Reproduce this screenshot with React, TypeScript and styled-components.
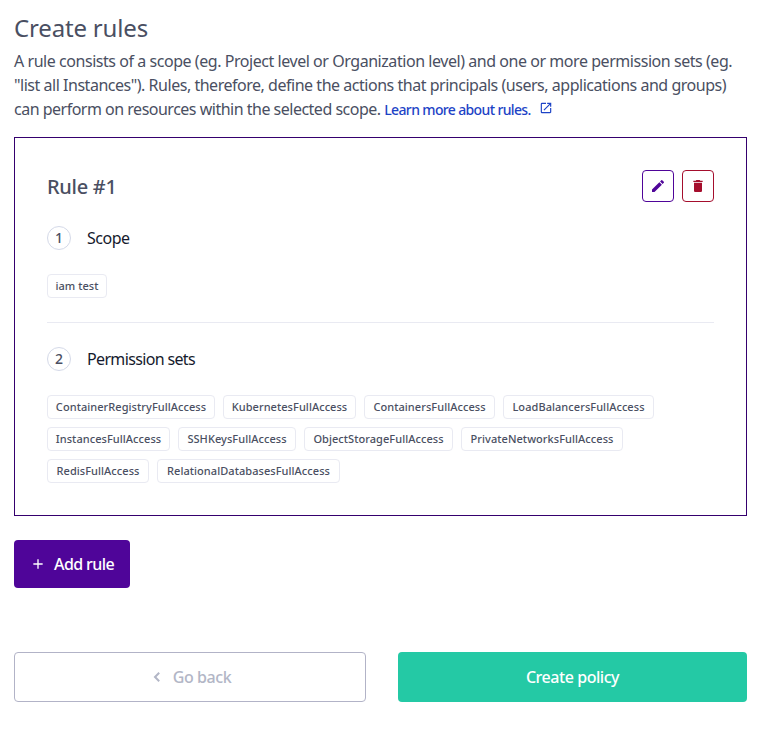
import React from "react";
import styled, { createGlobalStyle } from "styled-components";
import { MdAdd, MdDelete, MdEdit, MdOpenInNew } from "react-icons/md";

const GlobalStyle = createGlobalStyle`
  *, *::before, *::after { box-sizing: border-box; }
  body {
    margin: 0;
    background: #fff;
    color: #4a4f62;
    font-family: "Noto Sans", "Open Sans", sans-serif;
  }
  h1, h2, h3, p, ul, ol { margin: 0; padding: 0; font-weight: 400; }
  button { font-family: inherit; cursor: pointer; padding: 0; }
`;

const Page = styled.main`
  width: 733px;
  margin-left: 14px;
  padding-top: 12px;
`;

const Title = styled.h1`
  font-size: 24px;
  line-height: 32px;
  letter-spacing: -0.17px;
`;

const Intro = styled.p`
  margin-top: 5px;
  font-size: 16px;
  line-height: 24px;
`;

const Line = styled.span<{ $tracking?: number }>`
  display: block;
  height: 24px;
  white-space: nowrap;
  letter-spacing: ${({ $tracking = 0 }) => $tracking}px;
`;

const LearnMore = styled.a`
  color: #1d43c6;
  font-size: 14px;
  font-weight: 500;
  letter-spacing: -0.64px;
  text-decoration: none;

  svg {
    margin-left: 8px;
    width: 14px;
    height: 14px;
    vertical-align: 0;
  }
`;

const RuleCard = styled.section`
  margin-top: 16px;
  padding: 32px;
  height: 379px;
  border: 1px solid #35006e;
`;

const RuleHeader = styled.header`
  display: flex;
  align-items: center;
  justify-content: space-between;
  height: 32px;
`;

const RuleTitle = styled.h2`
  padding-top: 1px;
  font-size: 20px;
  font-weight: 500;
  line-height: 32px;
  letter-spacing: -0.3px;
`;

const Actions = styled.div`
  display: flex;
  gap: 8px;
`;

const IconButton = styled.button<{ $color: string }>`
  display: flex;
  align-items: center;
  justify-content: center;
  width: 32px;
  height: 32px;
  border: 1px solid ${({ $color }) => $color};
  border-radius: 4px;
  background: #fff;
  color: ${({ $color }) => $color};

  svg { width: 16px; height: 16px; }
`;

const Step = styled.div`
  display: flex;
  align-items: center;
  gap: 16px;
  margin-top: 24px;
`;

const StepNumber = styled.span`
  display: flex;
  align-items: center;
  justify-content: center;
  width: 24px;
  height: 24px;
  border: 1px solid #d4d9e8;
  border-radius: 50%;
  font-size: 14px;
  font-weight: 500;
  line-height: 22px;
`;

const StepLabel = styled.h3<{ $tracking: number }>`
  color: #151a2d;
  font-size: 16px;
  line-height: 24px;
  letter-spacing: ${({ $tracking }) => $tracking}px;
`;

const Chips = styled.ul`
  display: flex;
  flex-wrap: wrap;
  gap: 8px;
  margin-top: 24px;
  list-style: none;
`;

const Chip = styled.li<{ $width: number }>`
  display: flex;
  align-items: center;
  justify-content: center;
  width: ${({ $width }) => $width}px;
  height: 24px;
  border: 1px solid #e9eaf2;
  border-radius: 4px;
  font-size: 11px;
  font-weight: 500;
  line-height: 22px;
  letter-spacing: 0.06px;
  white-space: nowrap;
`;

const Divider = styled.hr`
  height: 1px;
  margin: 24px 0 0;
  border: 0;
  background: #e9eaf2;
`;

const Button = styled.button`
  display: flex;
  align-items: center;
  justify-content: center;
  border: 0;
  border-radius: 4px;
  color: #fff;
  font-size: 16px;
  font-weight: 500;
  line-height: 24px;
  letter-spacing: -0.45px;

  svg { width: 16px; height: 16px; }
`;

const AddButton = styled(Button)`
  gap: 8px;
  width: 116px;
  height: 48px;
  margin-top: 24px;
  background: #4f0599;
  letter-spacing: -0.6px;
`;

const Footer = styled.footer`
  display: grid;
  grid-template-columns: 352px 349px;
  gap: 32px;
  margin-top: 64px;
`;

const BackButton = styled(Button)`
  gap: 8px;
  height: 50px;
  border: 1px solid #b2b3c7;
  background: #fff;
  color: #b2b6c6;
`;

const CreateButton = styled(Button)`
  height: 50px;
  background: #24c9a5;
`;

const ChevronLeft = () => (
  <svg viewBox="0 0 16 16" fill="none" stroke="currentColor" strokeWidth="2" aria-hidden="true">
    <path d="M10.2 3.8 6 8l4.2 4.2" />
  </svg>
);

const permissionSets = [
  { name: "ContainerRegistryFullAccess", width: 168 },
  { name: "KubernetesFullAccess", width: 133 },
  { name: "ContainersFullAccess", width: 131 },
  { name: "LoadBalancersFullAccess", width: 151 },
  { name: "InstancesFullAccess", width: 123 },
  { name: "SSHKeysFullAccess", width: 118 },
  { name: "ObjectStorageFullAccess", width: 149 },
  { name: "PrivateNetworksFullAccess", width: 162 },
  { name: "RedisFullAccess", width: 102 },
  { name: "RelationalDatabasesFullAccess", width: 183 },
];

export default function App() {
  return (
    <>
      <GlobalStyle />
      <Page>
        <Title>Create rules</Title>
        <Intro>
          <Line $tracking={-0.45}>A rule consists of a scope (eg. Project level or Organization level) and one or more permission sets (eg.</Line>
          <Line $tracking={-0.475}>"list all Instances"). Rules, therefore, define the actions that principals (users, applications and groups)</Line>
          <Line $tracking={-0.5}>
            can perform on resources within the selected scope.{" "}
            <LearnMore href="#">
              Learn more about rules.
              <MdOpenInNew />
            </LearnMore>
          </Line>
        </Intro>

        <RuleCard>
          <RuleHeader>
            <RuleTitle>Rule #1</RuleTitle>
            <Actions>
              <IconButton $color="#4f0599" aria-label="Edit rule"><MdEdit /></IconButton>
              <IconButton $color="#a50e2d" aria-label="Delete rule"><MdDelete /></IconButton>
            </Actions>
          </RuleHeader>

          <Step>
            <StepNumber>1</StepNumber>
            <StepLabel $tracking={-0.5}>Scope</StepLabel>
          </Step>
          <Chips>
            <Chip $width={60}>iam test</Chip>
          </Chips>

          <Divider />

          <Step>
            <StepNumber>2</StepNumber>
            <StepLabel $tracking={-0.65}>Permission sets</StepLabel>
          </Step>
          <Chips>
            {permissionSets.map(({ name, width }) => (
              <Chip key={name} $width={width}>{name}</Chip>
            ))}
          </Chips>
        </RuleCard>

        <AddButton><MdAdd />Add rule</AddButton>

        <Footer>
          <BackButton><ChevronLeft />Go back</BackButton>
          <CreateButton>Create policy</CreateButton>
        </Footer>
      </Page>
    </>
  );
}
